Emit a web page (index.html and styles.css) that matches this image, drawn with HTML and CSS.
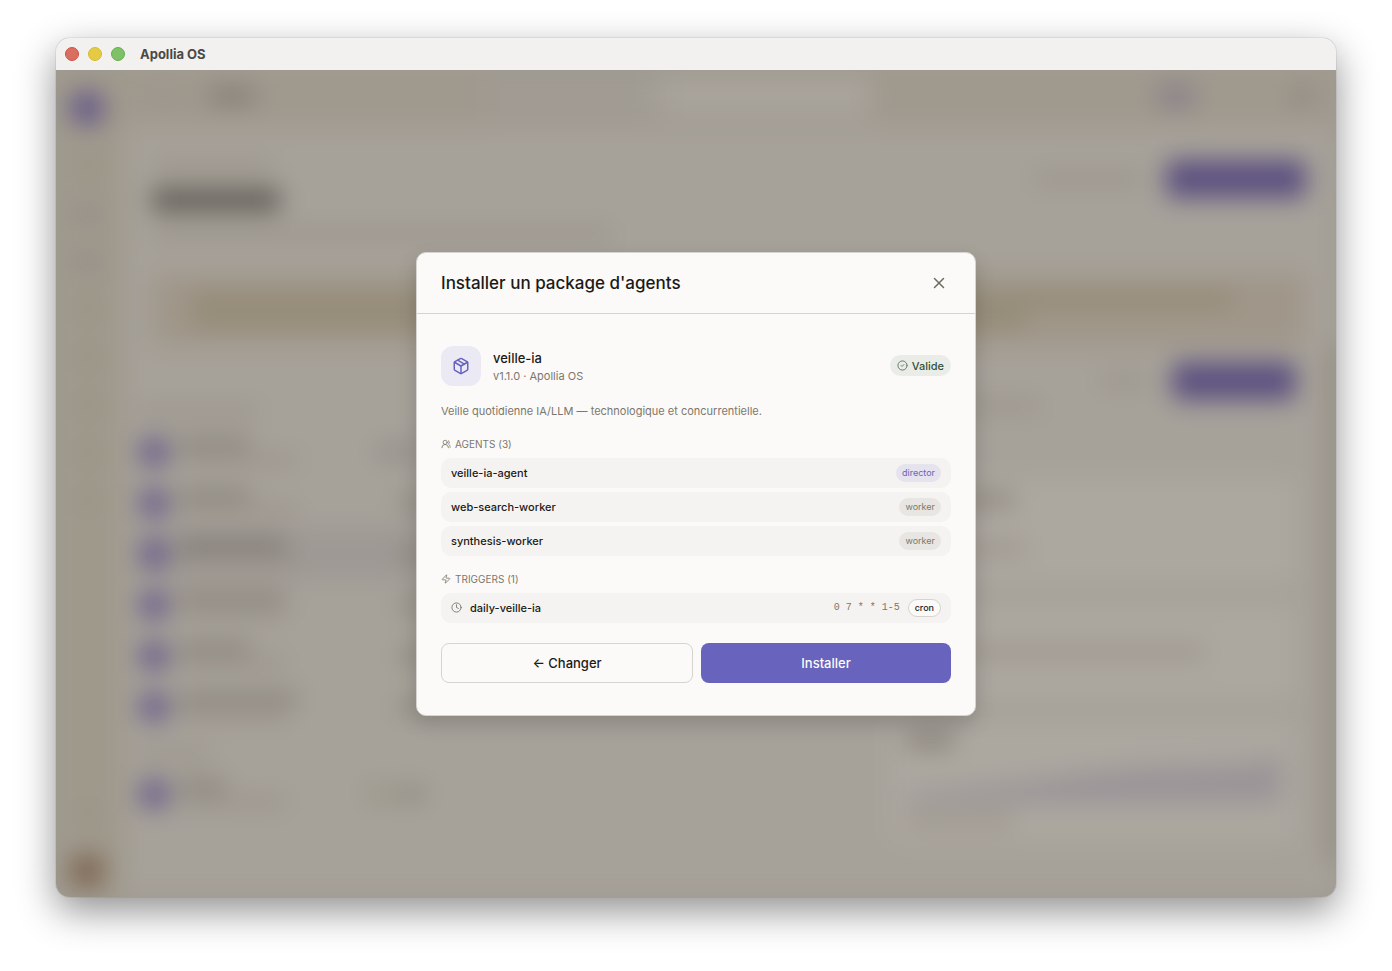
FILE: index.html
```
<!DOCTYPE html>
<html lang="fr">
<head>
<meta charset="utf-8">
<meta name="viewport" content="width=device-width, initial-scale=1">
<title>Apollia OS</title>
<link rel="stylesheet" href="styles.css">
</head>
<body>
<div class="window">
  <header class="titlebar">
    <span class="light light-close"></span>
    <span class="light light-min"></span>
    <span class="light light-max"></span>
    <span class="titlebar-name">Apollia OS</span>
  </header>
  <div class="stage">
    <div class="backdrop" aria-hidden="true">
      <div class="rail">
        <i class="dot dot-brand"></i>
        <i class="tick"></i>
        <i class="tick tick-active"></i>
        <i class="tick tick-active"></i>
        <i class="tick"></i>
        <i class="tick"></i>
        <i class="tick"></i>
        <i class="tick"></i>
        <i class="tick"></i>
        <i class="tick tick-low"></i>
        <i class="dot dot-user"></i>
      </div>
      <div class="app">
        <div class="topbar">
          <i class="bar w-50 faint"></i>
          <i class="bar w-50 dark"></i>
          <i class="search"></i>
          <i class="chip"></i>
          <i class="bar w-30 mid"></i>
        </div>
        <div class="page-head">
          <div class="stack">
            <i class="bar w-120 faint"></i>
            <i class="bar heading"></i>
            <i class="bar w-460 faint"></i>
          </div>
          <div class="actions">
            <i class="bar w-110 faint"></i>
            <i class="primary"></i>
          </div>
        </div>
        <div class="banner"><i class="bar line-full"></i><i class="bar line-part"></i></div>
        <div class="columns">
          <div class="list">
            <i class="bar w-120 faint list-label"></i>
            <div class="entry"><i class="dot"></i><div class="stack tight"><i class="bar w-80 mid"></i><i class="bar w-120 faint"></i></div><i class="bar w-50 cool"></i></div>
            <div class="entry"><i class="dot"></i><div class="stack tight"><i class="bar w-80 mid"></i><i class="bar w-120 faint"></i></div><i class="bar w-30 mid"></i></div>
            <div class="entry entry-active"><i class="dot"></i><div class="stack tight"><i class="bar w-110 dark"></i><i class="bar w-120 faint"></i></div><i class="bar w-30 mid"></i></div>
            <div class="entry"><i class="dot"></i><div class="stack tight"><i class="bar w-110 mid"></i><i class="bar w-110 faint"></i></div><i class="bar w-30 mid"></i></div>
            <div class="entry"><i class="dot"></i><div class="stack tight"><i class="bar w-80 mid"></i><i class="bar w-110 faint"></i></div><i class="bar w-30 mid"></i></div>
            <div class="entry"><i class="dot"></i><div class="stack tight"><i class="bar w-120 mid"></i><i class="bar w-110 faint"></i></div><i class="bar w-30 mid"></i></div>
            <i class="bar w-80 faint list-label list-label-next"></i>
            <div class="entry"><i class="dot"></i><div class="stack tight"><i class="bar w-50 mid"></i><i class="bar w-110 faint"></i></div><i class="bar w-30 olive"></i><i class="bar w-30 mid"></i></div>
          </div>
          <div class="detail">
            <div class="actions">
              <i class="bar w-50 faint"></i>
              <i class="primary primary-small"></i>
            </div>
            <i class="bar w-150 faint"></i>
            <div class="panel panel-first"><i class="bar w-110 mid"></i><i class="bar w-120 faint"></i></div>
            <div class="panel panel-second"><i class="bar line-most faint"></i></div>
            <div class="panel panel-chart">
              <i class="bar w-50 dark"></i>
              <svg class="chart" viewBox="0 0 360 44" preserveAspectRatio="none"><path d="M0 44V36L60 30L120 24L170 16L230 10L300 8L335 6L345 0H360V44Z"/></svg>
              <i class="bar w-110 faint"></i>
            </div>
          </div>
          <i class="scroll"></i>
        </div>
      </div>
    </div>

    <div class="overlay">
      <section class="dialog" role="dialog" aria-modal="true" aria-labelledby="dialog-title">
        <header class="dialog-head">
          <h1 class="dialog-title" id="dialog-title">Installer un package d'agents</h1>
          <button class="close" type="button" aria-label="Fermer">
            <svg class="icon" width="18" height="18" viewBox="0 0 24 24"><path d="M18 6 6 18M6 6l12 12"/></svg>
          </button>
        </header>
        <div class="dialog-body">
          <div class="package">
            <span class="package-icon">
              <svg class="icon" width="18" height="18" viewBox="0 0 24 24"><path d="M11 21.73a2 2 0 0 0 2 0l7-4A2 2 0 0 0 21 16V8a2 2 0 0 0-1-1.73l-7-4a2 2 0 0 0-2 0l-7 4A2 2 0 0 0 3 8v8a2 2 0 0 0 1 1.73z"/><path d="M12 22V12"/><path d="M3.3 7 12 12l8.7-5"/><path d="m7.500 4.270 9 5.150"/></svg>
            </span>
            <div class="package-info">
              <h2 class="package-name">veille-ia</h2>
              <p class="package-meta">v1.1.0 · Apollia OS</p>
            </div>
            <span class="status">
              <svg class="icon" width="11" height="11" viewBox="0 0 24 24"><circle cx="12" cy="12" r="10"/><path d="m9 12 2 2 4-4"/></svg>
              Valide
            </span>
          </div>
          <p class="description">Veille quotidienne IA/LLM — technologique et concurrentielle.</p>
          <section class="group">
            <h3 class="group-title">
              <svg class="icon" width="10" height="10" viewBox="0 0 24 24"><path d="M18 21a8 8 0 0 0-16 0"/><circle cx="10" cy="8" r="5"/><path d="M22 20c0-3.370-2-6.500-4-8a5 5 0 0 0-.45-8.300"/></svg>
              AGENTS (3)
            </h3>
            <ul class="rows">
              <li class="row"><span class="row-name">veille-ia-agent</span><span class="tag tag-director">director</span></li>
              <li class="row"><span class="row-name">web-search-worker</span><span class="tag tag-worker">worker</span></li>
              <li class="row"><span class="row-name">synthesis-worker</span><span class="tag tag-worker">worker</span></li>
            </ul>
          </section>
          <section class="group">
            <h3 class="group-title">
              <svg class="icon" width="10" height="10" viewBox="0 0 24 24"><path d="M4 14a1 1 0 0 1-.78-1.630l9.900-10.200a.5.5 0 0 1 .86.460l-1.920 6.020A1 1 0 0 0 13 10h7a1 1 0 0 1 .78 1.630l-9.900 10.200a.5.5 0 0 1-.86-.460l1.920-6.020A1 1 0 0 0 11 14z"/></svg>
              TRIGGERS (1)
            </h3>
            <ul class="rows">
              <li class="row">
                <svg class="icon" width="11" height="11" viewBox="0 0 24 24"><circle cx="12" cy="12" r="10"/><path d="M12 6v6l4 2"/></svg>
                <span class="row-name">daily-veille-ia</span>
                <code class="schedule">0 7 * * 1-5</code>
                <span class="tag tag-outline">cron</span>
              </li>
            </ul>
          </section>
          <div class="buttons">
            <button class="button button-secondary" type="button">← Changer</button>
            <button class="button button-primary" type="button">Installer</button>
          </div>
        </div>
      </section>
    </div>
  </div>
</div>
</body>
</html>
```
FILE: styles.css
```
* { box-sizing: border-box; }

body {
  margin: 0;
  min-height: 100vh;
  display: flex;
  padding: 38px 56px 74px;
  background: #fff;
  color: #1b1a18;
  font-family: Inter, "Liberation Sans", sans-serif;
  font-size: 11px;
}

h1, h2, h3, p, ul { margin: 0; padding: 0; font-weight: 400; list-style: none; }

.window {
  flex: 1;
  min-width: 0;
  display: flex;
  flex-direction: column;
  overflow: hidden;
  border-radius: 14px;
  box-shadow: 0 0 1px rgba(0, 0, 0, .6), 0 14px 38px rgba(0, 0, 0, .44);
}

.titlebar {
  display: flex;
  align-items: center;
  gap: 9px;
  height: 32px;
  padding-left: 9px;
  background: #f3f1ef;
}
.light { width: 14px; height: 14px; border: 1px solid; border-radius: 50%; }
.light-close { background: #d96f60; border-color: #cc5245; }
.light-min { background: #e5ca45; border-color: #d8b92c; }
.light-max { background: #80c068; border-color: #62b04a; }
.titlebar-name { margin-left: 6px; color: #4a4947; font-size: 13px; font-weight: 700; }

.stage { flex: 1; display: grid; overflow: hidden; background: #a09b92; }
.backdrop, .overlay { grid-area: 1 / 1; min-width: 0; }
.overlay { z-index: 1; display: grid; place-items: center; padding: 24px; }

/* Dimmed application behind the dialog */
.backdrop { display: flex; background: #a6a199; filter: blur(12px); }
.rail {
  width: 68px;
  padding: 20px 6px 8px 0;
  display: flex;
  flex-direction: column;
  align-items: center;
  gap: 32px;
  background: #9f998c;
}
.dot { flex: none; width: 32px; height: 32px; border-radius: 50%; background: #6e648b; }
.dot-brand { width: 36px; height: 36px; background: #685d88; }
.dot-user { width: 36px; height: 36px; background: #7f6854; }
.tick { width: 16px; height: 16px; border-radius: 8px; background: #979184; }
.tick-active { width: 32px; background: #938d8c; }
.tick-low { margin-top: auto; }
.app { flex: 1; min-width: 0; display: flex; flex-direction: column; }
.topbar {
  display: flex;
  align-items: center;
  gap: 20px;
  height: 56px;
  padding: 0 22px 4px 16px;
  background: #a0998e;
}
.search { width: 385px; height: 44px; margin: 0 266px 0 auto; background: linear-gradient(90deg, #a09b93 40%, #a8a39b 50%); }
.chip { width: 40px; height: 24px; margin-right: 74px; border-radius: 12px; background: #88828a; }
.bar { flex: none; height: 12px; border-radius: 4px; }
.faint { background: #9b958c; }
.mid { background: #89837a; }
.dark { background: #7b756e; }
.cool { background: #8e8e88; }
.olive { background: #979480; }
.w-30 { width: 24px; }
.w-50 { width: 48px; }
.w-80 { width: 72px; }
.w-110 { width: 108px; }
.w-120 { width: 120px; }
.w-150 { width: 150px; }
.w-460 { width: 460px; }
.heading { width: 128px; height: 24px; background: #66615a; }
.stack { display: flex; flex-direction: column; gap: 16px; }
.tight { flex: 1; gap: 4px; }
.page-head { display: flex; justify-content: space-between; padding: 34px 30px; padding-left: 28px; }
.actions { display: flex; align-items: center; align-self: flex-start; gap: 24px; }
.primary { width: 140px; height: 38px; border-radius: 8px; background: #5d5280; }
.primary-small { width: 124px; }
.banner {
  display: flex;
  flex-direction: column;
  justify-content: center;
  gap: 8px;
  height: 72px;
  margin: 0 30px 0 28px;
  padding: 0 72px 0 40px;
  border-radius: 8px;
  background: #a0978a;
}
.banner .bar { background: #90866f; }
.line-part { width: 80%; }
.line-most { width: 80%; }
.columns { flex: 1; display: flex; }
.list { flex: none; width: 316px; padding: 60px 16px 0 14px; }
.list-label { display: block; margin-bottom: 8px; }
.list-label-next { margin-top: 16px; }
.entry { display: flex; align-items: center; gap: 8px; height: 51px; }
.entry-active { background: #9f9995; }
.detail { flex: 1; min-width: 0; display: flex; flex-direction: column; padding: 16px 30px 24px 450px; }
.detail .actions { align-self: flex-end; }
.panel { display: flex; flex-direction: column; gap: 36px; margin-top: 24px; padding: 16px; border-radius: 8px; background: #aca79f; }
.panel-first { height: 104px; margin-top: 66px; }
.panel-second { height: 92px; justify-content: center; }
.panel-chart { height: 120px; gap: 12px; padding: 12px 16px; }
.chart { width: 100%; height: 44px; fill: #9a9498; }
.scroll { width: 10px; margin-bottom: 36px; background: #918b80; }

/* Dialog */
.dialog {
  width: 100%;
  max-width: 560px;
  overflow: hidden;
  border: 1px solid #d6d4d0;
  border-radius: 10px;
  background: #fbfaf8;
  box-shadow: 0 8px 20px rgba(0, 0, 0, .16);
}
.dialog-head {
  display: flex;
  align-items: center;
  justify-content: space-between;
  height: 61px;
  padding: 0 24px;
  border-bottom: 1px solid #d6d4d0;
}
.dialog-title { font-size: 17px; font-weight: 500; line-height: 28px; }
.close { display: grid; place-items: center; width: 24px; height: 24px; padding: 0; border: 0; background: none; color: #6f6b63; }
.icon { flex: none; fill: none; stroke: currentColor; stroke-width: 2; stroke-linecap: round; stroke-linejoin: round; }
.dialog-body { display: flex; flex-direction: column; gap: 16px; padding: 32px 24px; }

.package { display: flex; align-items: center; gap: 12px; }
.package-icon { display: grid; place-items: center; width: 40px; height: 40px; border-radius: 12px; background: #ebe9f4; color: #6863bc; }
.package-info { flex: 1; }
.package-name { font-size: 13px; font-weight: 500; line-height: 20px; }
.package-meta { color: #7b776e; line-height: 16px; }
.status {
  display: flex;
  align-items: center;
  gap: 4px;
  height: 21px;
  padding: 0 7px;
  border-radius: 12px;
  background: #eaede7;
  color: #35503a;
  font-weight: 500;
}
.status .icon { color: #55765b; }
.description { color: #7b776e; line-height: 19px; }

.group { display: flex; flex-direction: column; gap: 6px; }
.group-title { display: flex; align-items: center; gap: 4px; color: #7b776e; font-size: 10px; line-height: 15px; }
.rows { display: flex; flex-direction: column; gap: 4px; }
.row {
  display: flex;
  align-items: center;
  gap: 8px;
  height: 30px;
  padding: 0 10px;
  border-radius: 10px;
  background: #f4f3f1;
}
.row .icon { color: #7b776e; }
.row-name { flex: 1; font-weight: 500; }
.tag { display: flex; align-items: center; height: 18px; padding: 0 6px; border-radius: 9px; font-size: 9px; }
.tag-director { background: #e5e3ee; color: #6863bc; }
.tag-worker { background: #e8e6e2; color: #7b776e; }
.tag-outline { border: 1px solid #d6d4d0; background: #fbfaf8; font-weight: 500; }
.schedule { color: #7b776e; font-family: "Liberation Mono", monospace; font-size: 10px; }

.buttons { display: flex; gap: 8px; padding-top: 4px; }
.button { flex: 1; height: 40px; padding: 0 16px; border: 0; border-radius: 8px; font-family: inherit; font-size: 13px; font-weight: 500; }
.button-secondary { border: 1px solid #d6d4d0; background: #fbfaf8; color: #1b1a18; }
.button-primary { background: #6863bc; color: #fbfaf8; }
```
